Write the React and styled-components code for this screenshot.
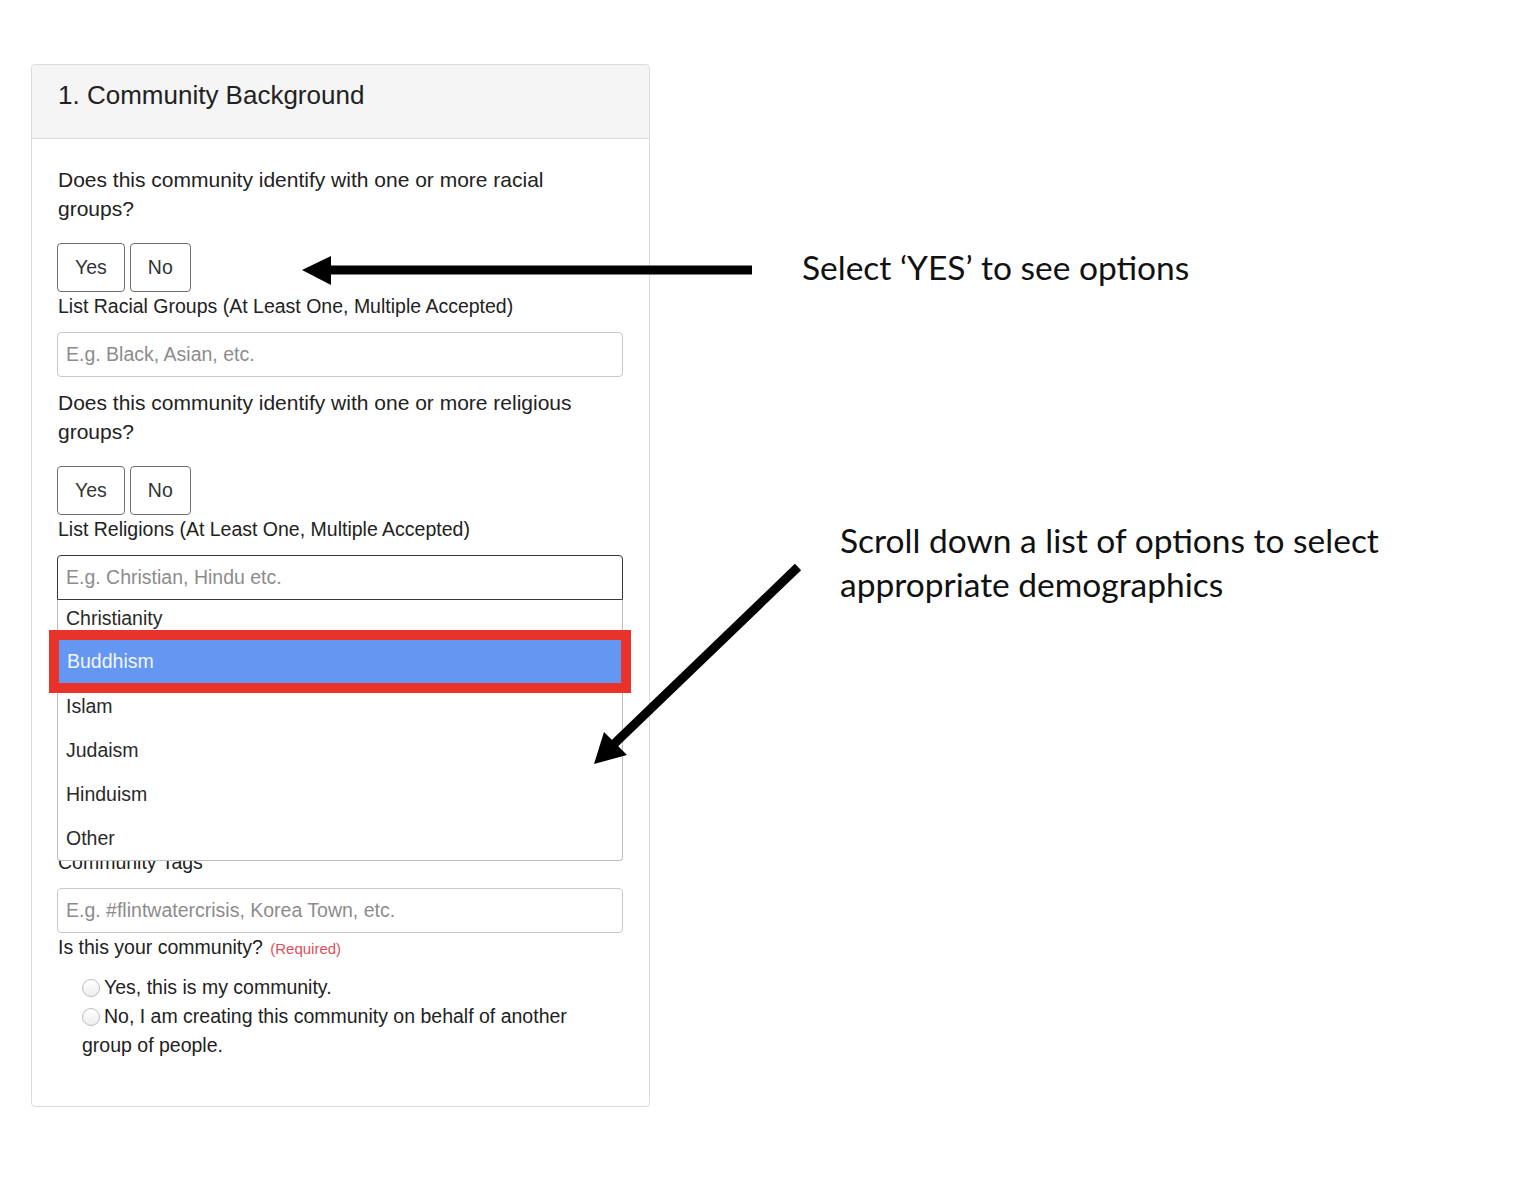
import React from "react";
import styled, { createGlobalStyle } from "styled-components";

const GlobalStyle = createGlobalStyle`
  html, body {
    margin: 0;
    padding: 0;
    background: #fff;
  }
  body {
    font-family: "Liberation Sans", Arial, sans-serif;
    color: #222;
  }
  * { box-sizing: border-box; }
`;

const religions = ["Christianity", "Buddhism", "Islam", "Judaism", "Hinduism", "Other"];

export default function App() {
  return (
    <Page>
      <GlobalStyle />
      <Card>
        <CardHeader>1. Community Background</CardHeader>
        <CardBody>
          <Question>Does this community identify with one or more racial groups?</Question>
          <ToggleRow>
            <ToggleButton>Yes</ToggleButton>
            <ToggleButton>No</ToggleButton>
          </ToggleRow>
          <FieldLabel>List Racial Groups (At Least One, Multiple Accepted)</FieldLabel>
          <TextInput placeholder="E.g. Black, Asian, etc." readOnly />

          <Question $spaced>Does this community identify with one or more religious groups?</Question>
          <ToggleRow>
            <ToggleButton>Yes</ToggleButton>
            <ToggleButton>No</ToggleButton>
          </ToggleRow>
          <FieldLabel>List Religions (At Least One, Multiple Accepted)</FieldLabel>
          <TextInput placeholder="E.g. Christian, Hindu etc." readOnly $open />
          <Dropdown>
            {religions.map((r, i) => (
              <Option key={r} $active={r === "Buddhism"} $first={i === 0}>
                {r}
              </Option>
            ))}
          </Dropdown>

          <FieldLabel>Community Tags</FieldLabel>
          <TextInput placeholder="E.g. #flintwatercrisis, Korea Town, etc." readOnly />
          <FieldLabel>
            Is this your community? <Required>(Required)</Required>
          </FieldLabel>
          <RadioList>
            <RadioLine>
              <Radio />Yes, this is my community.
            </RadioLine>
            <RadioLine>
              <Radio />No, I am creating this community on behalf of another group of people.
            </RadioLine>
          </RadioList>
        </CardBody>
      </Card>

      <Note $top={245} $left={802}>Select ‘YES’ to see options</Note>
      <Note $top={518} $left={840}>
        Scroll down a list of options to select
        <br />
        appropriate demographics
      </Note>

      <ArrowLayer viewBox="0 0 1520 1178">
        <line x1="326" y1="270" x2="752" y2="270" stroke="#000" strokeWidth="9" />
        <polygon points="302,270 331,256 331,285" fill="#000" />
        <line x1="798" y1="567" x2="614" y2="744" stroke="#000" strokeWidth="9" />
        <polygon points="594,764 627,755 604,732" fill="#000" />
      </ArrowLayer>
    </Page>
  );
}

const Page = styled.div`
  position: relative;
  width: 1520px;
  min-height: 1178px;
  padding: 64px 0 0 31px;
`;

const Card = styled.section`
  width: 619px;
  border: 1px solid #dcdcdc;
  border-radius: 4px;
  background: #fff;
`;

const CardHeader = styled.div`
  height: 74px;
  padding: 15px 26px 0;
  background: #f5f5f5;
  border-bottom: 1px solid #dcdcdc;
  border-radius: 4px 4px 0 0;
  font-size: 26px;
  line-height: 30px;
  color: #222;
`;

const CardBody = styled.div`
  display: flex;
  flex-direction: column;
  padding: 26px 26px 46px 25px;
`;

const Question = styled.p`
  margin: ${(p) => (p.$spaced ? "11px" : "0")} 0 0;
  padding-left: 1px;
  max-width: 540px;
  font-size: 21px;
  line-height: 29px;
  color: #222;
`;

const ToggleRow = styled.div`
  display: flex;
  gap: 5px;
  margin-top: 20px;
`;

const ToggleButton = styled.button`
  height: 49px;
  padding: 0 17px;
  border: 1px solid #6f6f6f;
  border-radius: 4px;
  background: #fff;
  font-family: "Liberation Sans", Arial, sans-serif;
  font-size: 19.5px;
  color: #333;
`;

const FieldLabel = styled.div`
  padding-left: 1px;
  font-size: 19.5px;
  line-height: 29px;
  color: #222;
`;

const TextInput = styled.input`
  display: block;
  width: 566px;
  height: 45px;
  margin-top: 11px;
  padding: 0 8px;
  border: 1.5px solid ${(p) => (p.$open ? "#3a3a3a" : "#c9c9c9")};
  border-radius: ${(p) => (p.$open ? "4px 4px 0 0" : "4px")};
  background: #fff;
  font-family: "Liberation Sans", Arial, sans-serif;
  font-size: 19.5px;
  outline: none;

  &::placeholder {
    color: #8c8c8c;
  }
`;

const Dropdown = styled.ul`
  position: relative;
  z-index: 2;
  width: 566px;
  margin: 0 0 -13px;
  padding: 0;
  list-style: none;
  background: #fff;
  border: 1.5px solid #bdbdbd;
  border-top: none;
  border-radius: 0 0 4px 4px;
`;

const Option = styled.li`
  position: relative;
  display: flex;
  align-items: center;
  padding: ${(p) => (p.$first ? "0 0 4px 8px" : "0 0 0 8px")};
  margin: ${(p) => (p.$active ? "0 1px 1px" : "0")};
  height: ${(p) => (p.$active ? "43px" : p.$first ? "40px" : "44px")};
  font-size: 19.5px;
  color: ${(p) => (p.$active ? "#f2f5ff" : "#2a2a2a")};
  background: ${(p) => (p.$active ? "#6397f1" : "transparent")};
  outline: ${(p) => (p.$active ? "10px solid #e8332a" : "none")};
  z-index: ${(p) => (p.$active ? 1 : 0)};
`;

const Required = styled.span`
  margin-left: 2px;
  font-size: 15px;
  color: #e0505a;
`;

const RadioList = styled.div`
  margin-top: 10px;
  padding-left: 25px;
  max-width: 545px;
`;

const RadioLine = styled.div`
  font-size: 19.5px;
  line-height: 29px;
  color: #222;
`;

const Radio = styled.span`
  display: inline-block;
  width: 18px;
  height: 18px;
  margin-right: 4px;
  vertical-align: -3px;
  border: 1px solid #bdbdbd;
  border-radius: 50%;
  background: linear-gradient(#fff, #eee);
`;

const Note = styled.div`
  position: absolute;
  top: ${(p) => p.$top}px;
  left: ${(p) => p.$left}px;
  font-family: Lato, "Open Sans", sans-serif;
  font-size: 33.5px;
  line-height: 44px;
  color: #111;
  white-space: nowrap;
`;

const ArrowLayer = styled.svg`
  position: absolute;
  z-index: 3;
  top: 0;
  left: 0;
  width: 1520px;
  height: 1178px;
  pointer-events: none;
`;
